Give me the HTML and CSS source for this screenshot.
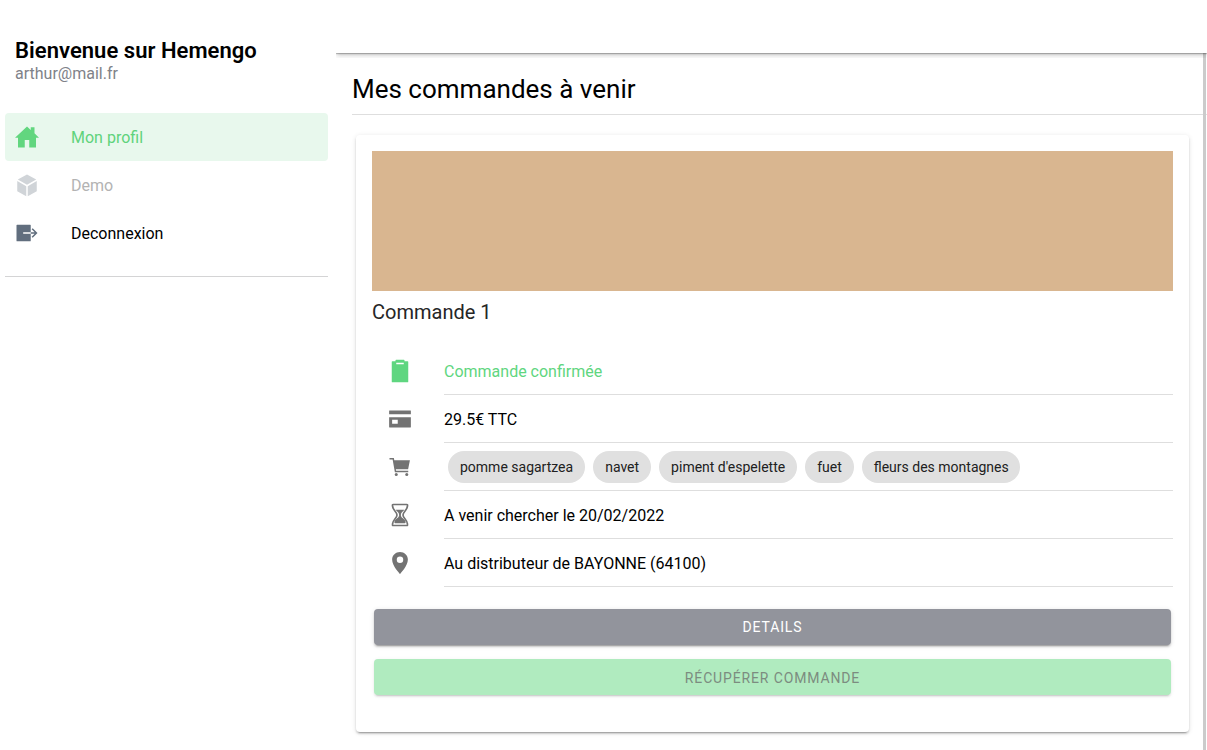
FILE: index.html
```html
<!DOCTYPE html>
<html lang="fr">
<head>
<meta charset="utf-8">
<title>Hemengo</title>
<link rel="stylesheet" href="styles.css">
</head>
<body>
<div class="app">
  <aside class="menu">
    <h1 class="menu-title">Bienvenue sur Hemengo</h1>
    <p class="menu-note">arthur@mail.fr</p>
    <nav class="menu-list">
      <a class="menu-item selected"><svg class="icon" viewBox="0 0 512 512"><path d="M416 174.7V48h-80v58.5L256 32 0 272h64v208h144V320h96v160h144V272h64z"/></svg><span>Mon profil</span></a>
      <a class="menu-item disabled"><svg class="icon" viewBox="0 0 512 512"><path d="M256 32L453 141 256 253 59 141zM48 170L240 280v216L48 388zM464 170L272 280v216l192-108z"/></svg><span>Demo</span></a>
      <a class="menu-item"><svg class="icon" viewBox="0 0 512 512"><path d="M335.7 272h-161v-32h161V92a12 12 0 00-12-12H44a12 12 0 00-12 12v328a12 12 0 0012 12h279.7a12 12 0 0012-12z"/><path d="M419 272l-64 64 22.7 22.6L480.3 256 377.7 153.4 355 176l64 64h-83.3v32z"/></svg><span>Deconnexion</span></a>
    </nav>
  </aside>
  <main class="page">
    <header class="toolbar"></header>
    <div class="content">
      <div class="scroll">
        <h2 class="heading">Mes commandes à venir</h2>
        <section class="card">
          <div class="banner"></div>
          <h3 class="card-title">Commande 1</h3>
          <div class="row success"><svg class="icon" viewBox="0 0 512 512"><path fill-rule="evenodd" d="M420 48h-68V28a12 12 0 00-12-12H172a12 12 0 00-12 12v20H92a12 12 0 00-12 12v424a12 12 0 0012 12h328a12 12 0 0012-12V60a12 12 0 00-12-12zm-84 64H176V80h160z"/></svg><div class="cell">Commande confirmée</div></div>
          <div class="row"><svg class="icon" viewBox="0 0 512 512"><path fill-rule="evenodd" d="M32 72h448a8 8 0 018 8v72H24V80a8 8 0 018-8zM24 216h464v212a8 8 0 01-8 8H32a8 8 0 01-8-8zM88 272v84h120v-84z"/></svg><div class="cell">29.5€ TTC</div></div>
          <div class="row"><svg class="icon" viewBox="0 0 512 512"><circle cx="176" cy="416" r="32"/><circle cx="400" cy="416" r="32"/><path d="M167.8 304h261.3l38.4-192H133.9l-8.5-48H32v32h66.6l48 272H432v-32H173.4z"/></svg><div class="cell chips"><span class="chip">pomme sagartzea</span><span class="chip">navet</span><span class="chip">piment d'espelette</span><span class="chip">fuet</span><span class="chip">fleurs des montagnes</span></div></div>
          <div class="row"><svg class="icon" viewBox="0 0 512 512"><path class="outline" d="M112 32h288c18 0 18 12 16 28-8 100-96 126-96 196s88 96 96 196c2 16 2 28-16 28H112c-18 0-18-12-16-28 8-100 96-126 96-196S104 160 96 60c-2-16-2-28 16-28z"/><path d="M164 144h184c-24 34-74 58-74 112 0 63 84 80 100 140 6 20 0 36-16 36H154c-16 0-22-16-16-36 16-60 100-77 100-140 0-54-50-78-74-112z"/></svg><div class="cell">A venir chercher le 20/02/2022</div></div>
          <div class="row"><svg class="icon" viewBox="0 0 512 512"><path fill-rule="evenodd" d="M256 20C163 20 88 90 88 179c0 137 168 309 168 309s168-172 168-309c0-89-75-159-168-159zm0 236a69 69 0 110-138 69 69 0 010 138z"/></svg><div class="cell">Au distributeur de BAYONNE (64100)</div></div>
          <button class="button medium">DETAILS</button>
          <button class="button pale">RÉCUPÉRER COMMANDE</button>
        </section>
      </div>
      <div class="scrollbar"></div>
    </div>
  </main>
</div>
</body>
</html>
```
FILE: styles.css
```css
* { box-sizing: border-box; }
body { margin: 0; background: #fff; color: #000; font-family: Roboto, sans-serif; font-size: 16px; }
h1, h2, h3, p { margin: 0; }
.app { display: flex; height: 750px; overflow: hidden; }
.icon { width: 24px; height: 24px; flex: none; fill: currentColor; }

.menu { width: 336px; flex: none; padding: 37px 8px 0 5px; }
.menu-title { padding-left: 10px; font-size: 22px; font-weight: 600; line-height: 28px; letter-spacing: .04px; }
.menu-note { padding-left: 10px; line-height: 18px; color: #808289; }
.menu-list { margin-top: 30px; height: 164px; border-bottom: 1px solid #d4d4d5; }
.menu-item { display: flex; align-items: center; gap: 32px; height: 48px; padding: 0 10px; border-radius: 4px; }
.menu-item .icon { color: #616e7e; }
.menu-item.selected { background: #e8f8ed; color: #5fd37c; }
.menu-item.selected .icon { color: #62d67f; }
.menu-item.disabled { color: #b3b3b3; }
.menu-item.disabled .icon { color: #d0d4d8; }

.page { flex: 1; min-width: 0; display: flex; flex-direction: column; }
.toolbar { flex: none; height: 53px; box-shadow: 0 2px 4px -1px rgba(0,0,0,.2), 0 4px 5px rgba(0,0,0,.08), 0 1px 1px rgba(0,0,0,.22); clip-path: inset(0 0 -5px 0); position: relative; z-index: 1; }
.content { flex: 1; min-height: 0; display: flex; position: relative; }
.scroll { flex: 1; min-width: 0; overflow: hidden; }
.scrollbar { position: absolute; top: 0; bottom: 0; right: 1px; width: 3px; background: #cbcbcb; }
.heading { height: 62px; margin-left: 16px; padding-top: 18px; border-bottom: 1px solid #dedede; font-size: 26px; font-weight: 400; line-height: 36px; }

.card { margin: 20px 18px 0 20px; height: 597px; padding: 16px; border-radius: 4px; box-shadow: 0 3px 1px -2px rgba(0,0,0,.2), 0 2px 2px rgba(0,0,0,.14), 0 1px 5px rgba(0,0,0,.12); }
.banner { height: 140px; background: #d9b690; }
.card-title { height: 56px; padding-top: 9px; font-size: 20px; font-weight: 400; line-height: 24px; color: #262626; }
.row { display: flex; align-items: center; height: 48px; padding-left: 16px; color: #737373; }
.cell { display: flex; align-items: center; flex: 1; height: 48px; margin-left: 32px; padding-top: 2px; border-bottom: 1px solid #dedede; color: #000; }
.success, .success .cell { color: #5fd680; }
.chips { gap: 8px; padding: 0 0 0 4px; }
.chip { display: flex; align-items: center; height: 32px; padding: 0 12px; border-radius: 16px; background: #e0e0e0; color: #212121; font-size: 14px; }
.chip:last-child { padding-right: 11px; }
.outline { fill: none; stroke: currentColor; stroke-width: 36; }

.button { display: block; width: calc(100% - 4px); height: 36px; margin: 22px 2px 0; padding: 0; border: 0; border-radius: 4px; font: 400 14px/36px Roboto, sans-serif; letter-spacing: .86px; box-shadow: 0 3px 1px -2px rgba(0,0,0,.2), 0 2px 2px rgba(0,0,0,.14), 0 1px 5px rgba(0,0,0,.12); }
.medium { background: #92949c; color: #fff; }
.pale { margin-top: 14px; padding-top: 1px; background: #b0ebbf; color: #7c8c80; box-shadow: 0 3px 1px -2px rgba(0,0,0,.1), 0 2px 2px rgba(0,0,0,.07), 0 1px 5px rgba(0,0,0,.06); }
```
